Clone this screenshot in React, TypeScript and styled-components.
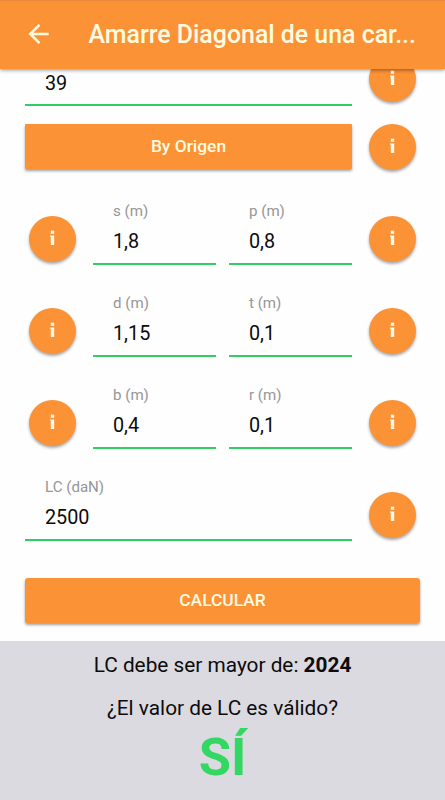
import React from 'react';
import styled, { createGlobalStyle } from 'styled-components';

const ORANGE = '#fc9236';
const GREEN = '#32cd64';

const GlobalStyle = createGlobalStyle`
  * { box-sizing: border-box; }
  body {
    margin: 0;
    background: #fefefe;
    font-family: Roboto, "Liberation Sans", sans-serif;
    color: #0c0c0c;
    overflow: hidden;
  }
`;

const Screen = styled.div`
  display: flex;
  flex-direction: column;
  width: 445px;
  height: 800px;
  overflow: hidden;
`;

const Header = styled.header`
  position: relative;
  z-index: 1;
  flex: none;
  display: flex;
  align-items: center;
  gap: 37.5px;
  height: 69px;
  padding: 0 26px 2px;
  background: ${ORANGE};
  border-top: 1px solid #e9893a;
  box-shadow: 0 1px 4px rgba(0, 0, 0, 0.45);
`;

const BackButton = styled.button`
  display: flex;
  width: 25px;
  padding: 0;
  border: 0;
  background: none;
`;

const Title = styled.h1`
  margin: 2px 0 0;
  color: #fffbe0;
  font-size: 24.9px;
  line-height: 30px;
  font-weight: 500;
  white-space: nowrap;
`;

const Form = styled.main`
  flex: none;
  height: 572px;
  overflow: hidden;
`;

const Rows = styled.div`
  display: flex;
  flex-direction: column;
  margin-top: -41px;
  padding: 0 25px;
`;

const Row = styled.div<{ $columns: string; $space: number }>`
  display: grid;
  grid-template-columns: ${(p) => p.$columns};
  align-items: start;
  column-gap: 13px;
  margin-top: ${(p) => p.$space}px;
`;

const Field = styled.label<{ $height: number }>`
  display: flex;
  flex-direction: column;
  height: ${(p) => p.$height}px;
  padding: 15px 0 0 20px;
  border-bottom: 2px solid ${GREEN};
`;

const FieldName = styled.span`
  height: 21px;
  color: #969696;
  font-size: 15.1px;
  line-height: 21px;
`;

const FieldValue = styled.span`
  margin-top: 7px;
  font-size: 19.8px;
  line-height: 26px;
`;

const InfoCell = styled.div<{ $offset: number }>`
  display: flex;
  justify-content: center;
  padding-top: ${(p) => p.$offset}px;
`;

const InfoButton = styled.button`
  display: flex;
  align-items: center;
  justify-content: center;
  width: 47px;
  height: 46px;
  padding: 0 0 2px;
  border: 0;
  border-radius: 50%;
  background: ${ORANGE};
  box-shadow: 0 2px 3px rgba(0, 0, 0, 0.34);
`;

const ActionButton = styled.button<{ $radius: number }>`
  height: 45px;
  padding: 0 0 1px;
  border: 0;
  border-radius: ${(p) => p.$radius}px;
  background: ${ORANGE};
  box-shadow: 0 2px 3px rgba(0, 0, 0, 0.38);
  color: #fffbe0;
  font: 500 17.4px/42px Roboto, "Liberation Sans", sans-serif;
`;

const Result = styled.footer`
  flex: 1;
  display: flex;
  flex-direction: column;
  align-items: center;
  padding-top: 11px;
  background: #dbdae0;
`;

const ResultLine = styled.p`
  margin: 0 0 17px;
  font-size: 20.8px;
  line-height: 26px;
  white-space: nowrap;
`;

const Verdict = styled.strong`
  margin-top: -13px;
  color: #33d862;
  font-size: 52.5px;
  line-height: 64px;
  font-weight: 700;
`;

const Info = ({ offset = 29.5 }: { offset?: number }) => (
  <InfoCell $offset={offset}>
    <InfoButton aria-label="Info">
      <svg width="9" height="16" viewBox="0 0 9 16" fill="#fffbe8">
        <rect x="2.8" y="0.6" width="3.4" height="3.2" />
        <path d="M2 5.4h4.2v9.6H2.8V6.8H2z" />
      </svg>
    </InfoButton>
  </InfoCell>
);

const Input = ({ name, value, height = 79 }: { name: string; value: string; height?: number }) => (
  <Field $height={height}>
    <FieldName>{name}</FieldName>
    <FieldValue>{value}</FieldValue>
  </Field>
);

const pairs = [
  [{ name: 's (m)', value: '1,8' }, { name: 'p (m)', value: '0,8' }],
  [{ name: 'd (m)', value: '1,15' }, { name: 't (m)', value: '0,1' }],
  [{ name: 'b (m)', value: '0,4' }, { name: 'r (m)', value: '0,1' }],
];

const WIDE = '327px 55px';
const PAIR = '55px 123px 123px 55px';

export default function App() {
  return (
    <>
      <GlobalStyle />
      <Screen>
        <Header>
          <BackButton aria-label="Back">
            <svg width="25" height="24" viewBox="0 0 25 24" fill="none" stroke="#fffbe0" strokeWidth="2.5">
              <path d="M22.7 12H4.2M13.5 2.8L4.2 12l9.3 9.2" />
            </svg>
          </BackButton>
          <Title>Amarre Diagonal de una car...</Title>
        </Header>
        <Form>
          <Rows>
            <Row $columns={WIDE} $space={0}>
              <Input name="" value="39" height={78} />
              <Info offset={28} />
            </Row>
            <Row $columns={WIDE} $space={18}>
              <ActionButton $radius={1}>By Origen</ActionButton>
              <Info offset={0} />
            </Row>
            {pairs.map(([left, right], i) => (
              <Row key={left.name} $columns={PAIR} $space={i === 0 ? 16 : 13}>
                <Info />
                <Input {...left} />
                <Input {...right} />
                <Info />
              </Row>
            ))}
            <Row $columns={WIDE} $space={13}>
              <Input name="LC (daN)" value="2500" />
              <Info />
            </Row>
            <Row $columns="1fr" $space={37}>
              <ActionButton $radius={3}>CALCULAR</ActionButton>
            </Row>
          </Rows>
        </Form>
        <Result>
          <ResultLine>
            LC debe ser mayor de: <b>2024</b>
          </ResultLine>
          <ResultLine>¿El valor de LC es válido?</ResultLine>
          <Verdict>SÍ</Verdict>
        </Result>
      </Screen>
    </>
  );
}
